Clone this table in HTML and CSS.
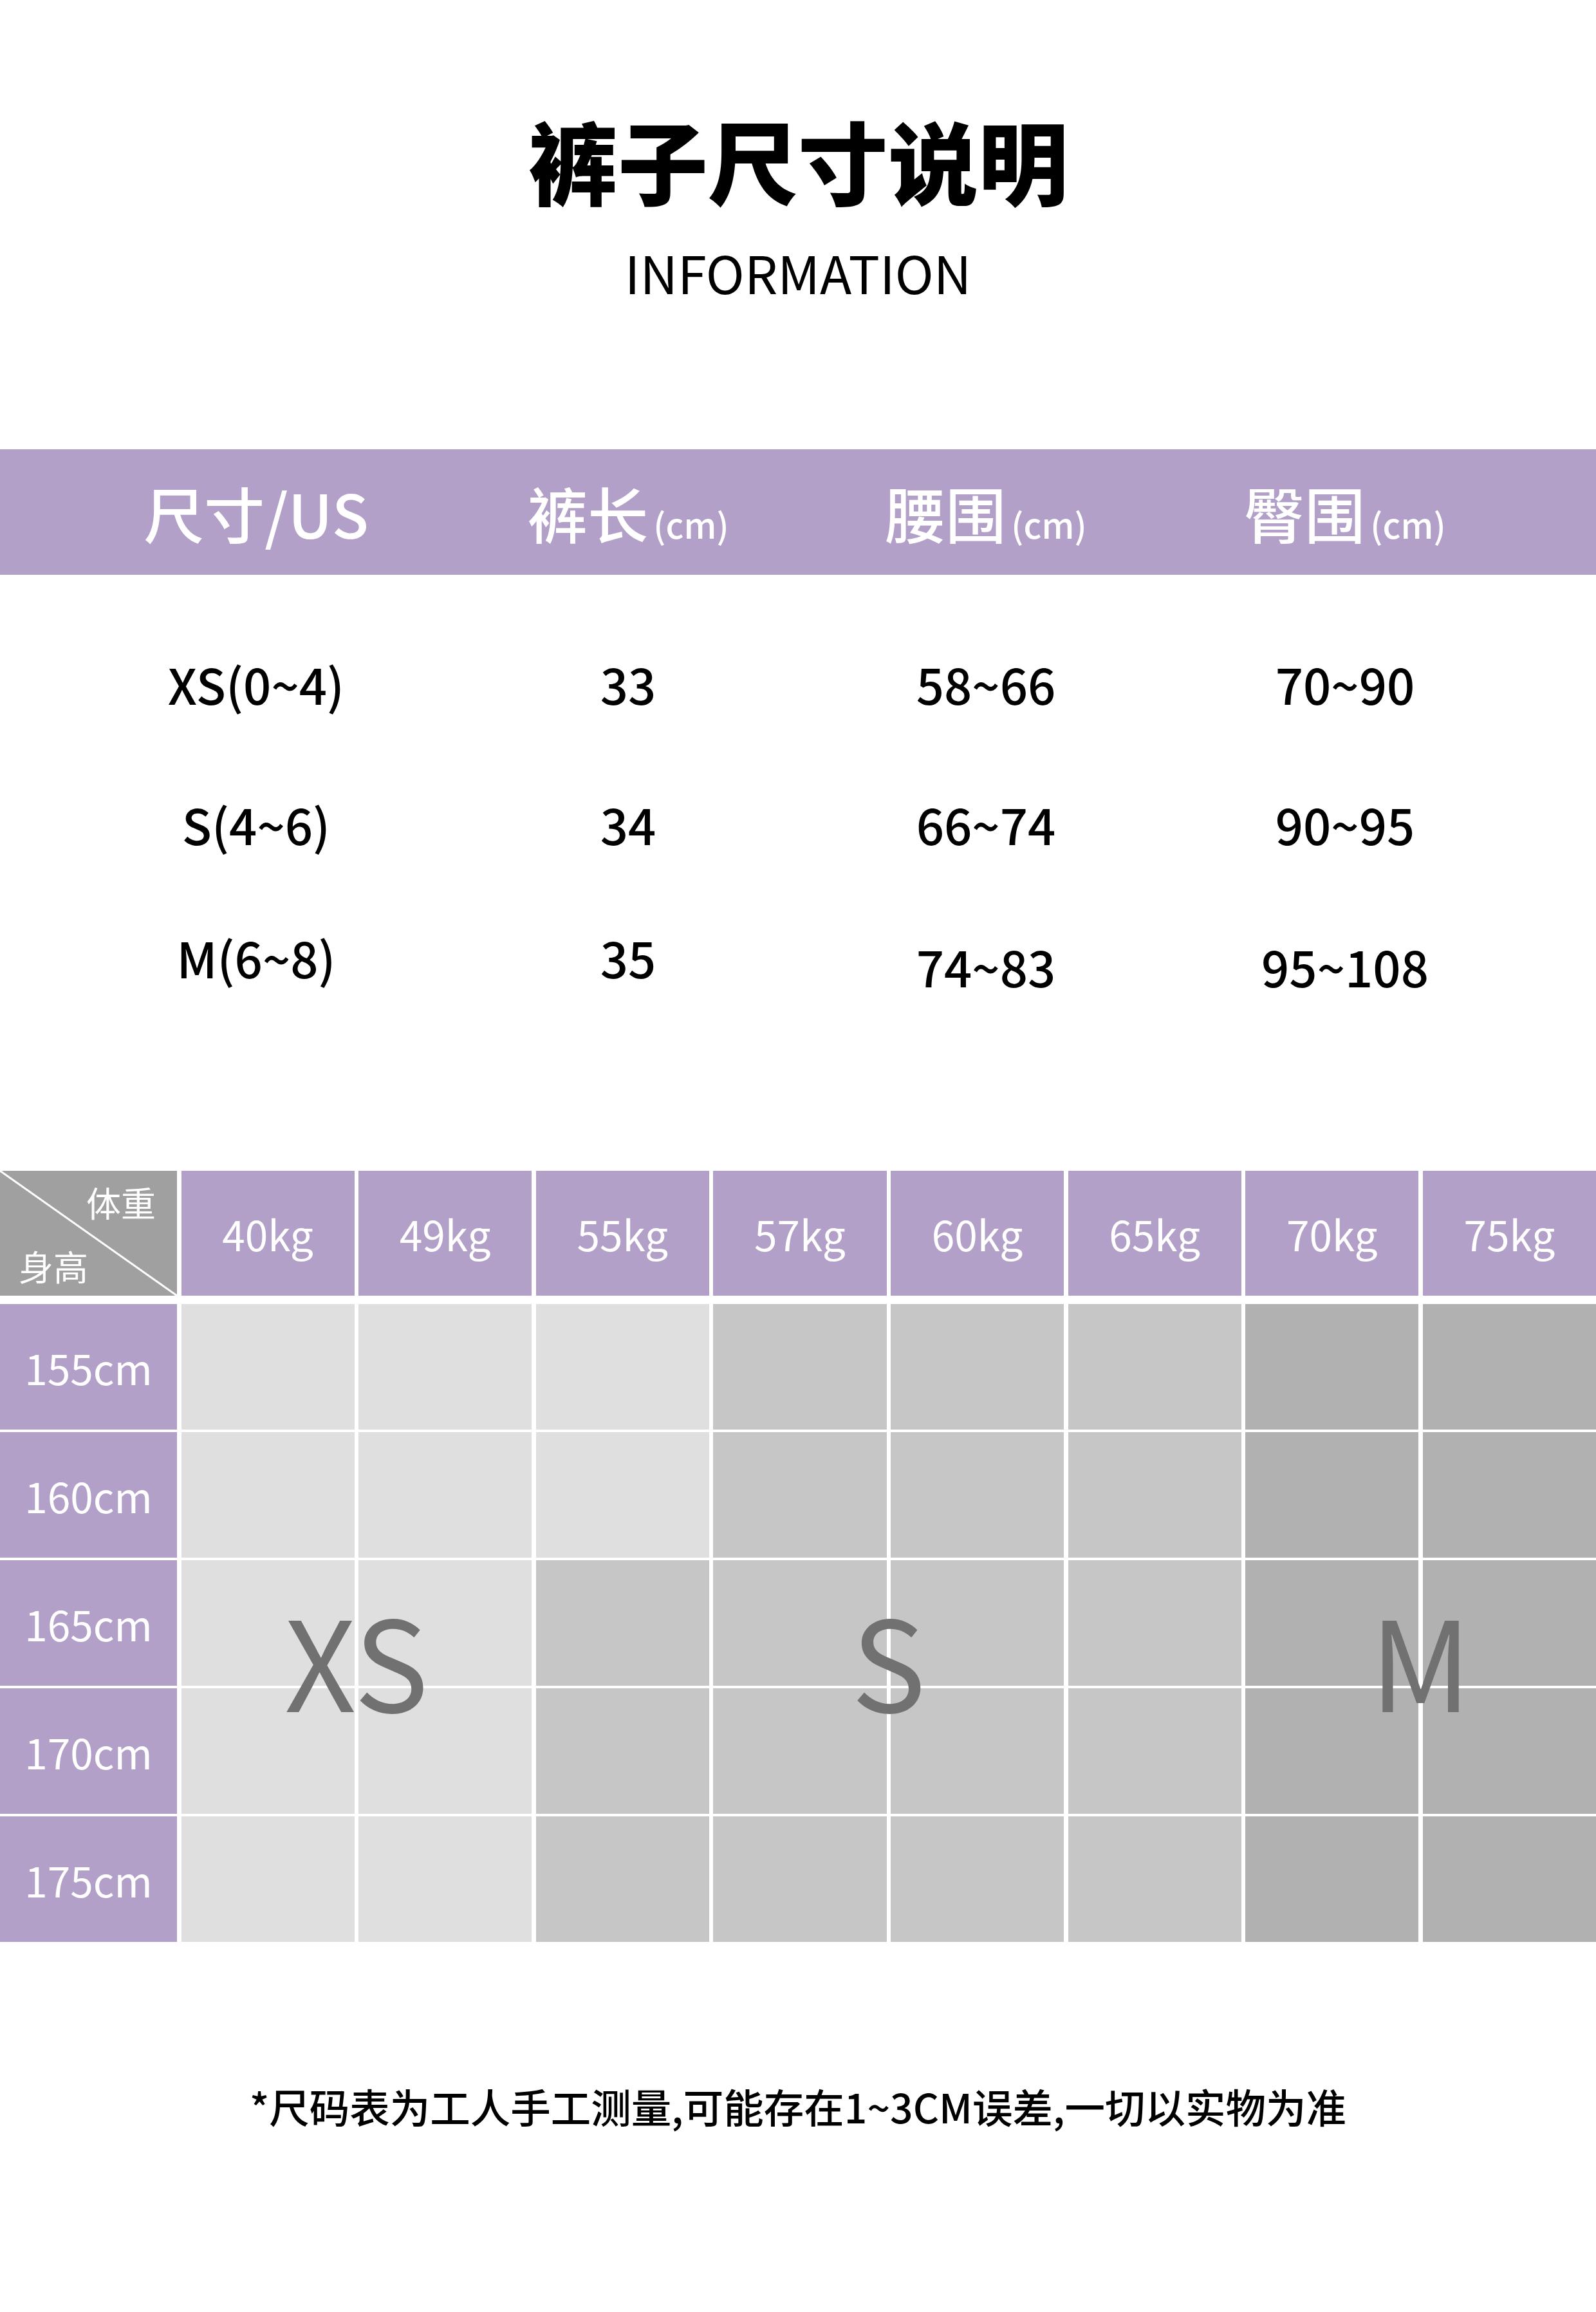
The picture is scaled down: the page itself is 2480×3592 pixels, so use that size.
FILE: index.html
```html
<!DOCTYPE html>
<html lang="zh-CN">
<head>
<meta charset="utf-8">
<title>裤子尺寸说明</title>
<link rel="stylesheet" href="styles.css">
</head>
<body>
<div class="page">
  <header class="intro">
    <h1 class="title">裤子尺寸说明</h1>
    <p class="subtitle">INFORMATION</p>
  </header>

  <section class="size-table">
    <div class="size-head">
      <div class="sh">尺寸/US</div>
      <div class="sh">裤长<span class="unit">(cm)</span></div>
      <div class="sh">腰围<span class="unit">(cm)</span></div>
      <div class="sh">臀围<span class="unit">(cm)</span></div>
    </div>
    <div class="size-row">
      <div class="sv">XS(0~4)</div>
      <div class="sv">33</div>
      <div class="sv">58~66</div>
      <div class="sv">70~90</div>
    </div>
    <div class="size-row">
      <div class="sv">S(4~6)</div>
      <div class="sv">34</div>
      <div class="sv">66~74</div>
      <div class="sv">90~95</div>
    </div>
    <div class="size-row">
      <div class="sv hi">M(6~8)</div>
      <div class="sv hi">35</div>
      <div class="sv lo">74~83</div>
      <div class="sv lo">95~108</div>
    </div>
  </section>

  <section class="fit">
    <div class="fit-head">
      <div class="corner"><span class="c-w">体重</span><span class="c-h">身高</span></div>
      <div class="fh">40kg</div>
      <div class="fh">49kg</div>
      <div class="fh">55kg</div>
      <div class="fh">57kg</div>
      <div class="fh">60kg</div>
      <div class="fh">65kg</div>
      <div class="fh">70kg</div>
      <div class="fh">75kg</div>
    </div>
    <div class="fit-wrap">
      <div class="fit-body">
        <div class="rl">155cm</div>
        <div class="c l"></div><div class="c l"></div><div class="c l"></div><div class="c m"></div><div class="c m"></div><div class="c m"></div><div class="c d"></div><div class="c d"></div>
        <div class="rl">160cm</div>
        <div class="c l"></div><div class="c l"></div><div class="c l"></div><div class="c m"></div><div class="c m"></div><div class="c m"></div><div class="c d"></div><div class="c d"></div>
        <div class="rl">165cm</div>
        <div class="c l"></div><div class="c l"></div><div class="c m"></div><div class="c m"></div><div class="c m"></div><div class="c m"></div><div class="c d"></div><div class="c d"></div>
        <div class="rl">170cm</div>
        <div class="c l"></div><div class="c l"></div><div class="c m"></div><div class="c m"></div><div class="c m"></div><div class="c m"></div><div class="c d"></div><div class="c d"></div>
        <div class="rl">175cm</div>
        <div class="c l"></div><div class="c l"></div><div class="c m"></div><div class="c m"></div><div class="c m"></div><div class="c m"></div><div class="c d"></div><div class="c d"></div>
      </div>
      <div class="fit-overlay">
        <div class="big big-xs">XS</div>
        <div class="big big-s">S</div>
        <div class="big big-m">M</div>
      </div>
    </div>
  </section>

  <p class="note">*尺码表为工人手工测量,可能存在1~3CM误差,一切以实物为准</p>
</div>
</body>
</html>
```
FILE: styles.css
```css
html, body {
  margin: 0;
  padding: 0;
  background: #ffffff;
}
body {
  font-family: "Noto Sans CJK SC", "Noto Sans", sans-serif;
  color: #000;
}
.page {
  width: 2480px;
  min-height: 3592px;
  padding-top: 177px;
  box-sizing: border-box;
}

/* intro */
.intro {
  text-align: center;
}
.title {
  margin: 0;
  font-size: 140px;
  line-height: 140px;
  font-weight: 900;
}
.subtitle {
  margin: 64px 0 0;
  font-size: 81px;
  line-height: 81px;
  font-weight: 400;
}

/* size table */
.size-table {
  margin-top: 236px;
}
.size-head {
  display: grid;
  grid-template-columns: 560px 596px 516px 600px;
  padding-left: 118px;
  height: 195px;
  align-items: center;
  background: #b3a0c8;
  color: #fff;
}
.sh {
  text-align: center;
  font-size: 94px;
  line-height: 1;
  font-weight: 500;
}
.unit {
  font-size: 54px;
  margin-left: 8px;
}
.size-row {
  display: grid;
  grid-template-columns: 560px 596px 516px 600px;
  padding-left: 118px;
}
.size-head + .size-row {
  margin-top: 60px;
}
.sv {
  height: 218px;
  box-sizing: border-box;
  display: flex;
  align-items: center;
  justify-content: center;
  font-size: 76px;
  line-height: 1;
  font-weight: 500;
}
.sv.hi {
  padding-bottom: 22px;
}
.sv.lo {
  padding-top: 6px;
}

/* fit grid */
.fit {
  margin-top: 212px;
}
.fit-head,
.fit-body,
.fit-overlay {
  display: grid;
  grid-template-columns: 275px repeat(8, 1fr);
  column-gap: 6.5px;
}
.fit-head {
  height: 194px;
}
.fit-wrap {
  position: relative;
  margin-top: 13px;
}
.fit-body,
.fit-overlay {
  grid-template-rows: repeat(5, 195px);
  row-gap: 4px;
}
.fit-overlay {
  position: absolute;
  inset: 0;
  pointer-events: none;
}
.corner {
  background: linear-gradient(to top right, #a0a0a0 calc(50% - 2px), #ffffff calc(50% - 1px), #ffffff calc(50% + 1px), #a0a0a0 calc(50% + 2px));
  display: flex;
  flex-direction: column;
  justify-content: space-between;
  padding: 22px 33px 19px 29px;
  box-sizing: border-box;
  color: #fff;
  font-size: 54px;
  line-height: 1;
}
.c-w {
  align-self: flex-end;
}
.c-h {
  align-self: flex-start;
}
.fh,
.rl {
  background: #b3a0c8;
  color: #fff;
  display: flex;
  align-items: center;
  justify-content: center;
  font-size: 64px;
  line-height: 1;
  font-weight: 400;
}
.c.l { background: #dfdfdf; }
.c.m { background: #c6c6c6; }
.c.d { background: #b1b1b1; }

.big {
  grid-row: 3 / span 2;
  display: flex;
  align-items: center;
  justify-content: center;
  padding-bottom: 91px;
  font-size: 194px;
  line-height: 1;
  color: #717171;
  font-weight: 400;
}
.big-xs { grid-column: 2 / span 2; }
.big-s  { grid-column: 5 / span 2; }
.big-m  { grid-column: 8 / span 2; }

/* note */
.note {
  margin: 223px 0 0;
  text-align: center;
  font-size: 62.5px;
  line-height: 63px;
  font-weight: 500;
}
```
